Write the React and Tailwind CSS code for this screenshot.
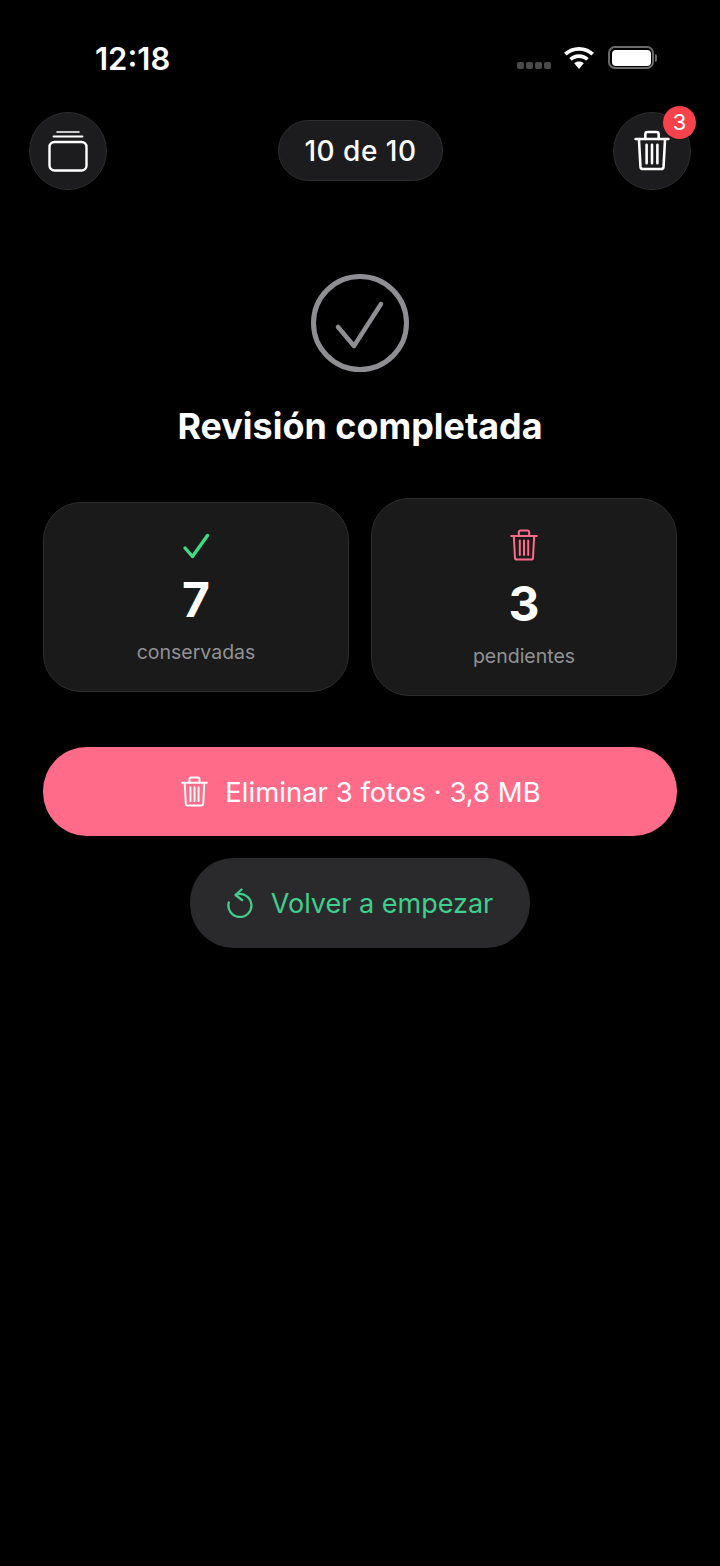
const font = { fontFamily: 'Inter, "Noto Sans", sans-serif' };

function TrashIcon({ className }) {
  return (
    <svg viewBox="0 0 28 32" fill="none" stroke="currentColor" strokeWidth="2" strokeLinecap="round" strokeLinejoin="round" className={className}>
      <path d="M1.200 7h25.600" />
      <path d="M8.800 7V3.200c0-1 .7-1.700 1.700-1.700h7c1 0 1.700.7 1.700 1.700V7" />
      <path d="M3.800 7l1.200 21.800c.1 1.100.8 1.700 1.900 1.700h14.200c1.100 0 1.800-.6 1.900-1.700L24.200 7" />
      <path d="M9.800 11.500v14.500M14 11.500v14.500M18.200 11.500v14.500" />
    </svg>
  );
}

function StackIcon() {
  return (
    <svg viewBox="0 0 40 42" fill="none" stroke="currentColor" strokeLinecap="round" className="w-[40px] h-[42px] text-white">
      <path d="M9 2h22" strokeWidth="1.600" />
      <path d="M5.500 6.500h29" strokeWidth="1.800" />
      <rect x="1.500" y="12" width="37" height="28.500" rx="5" strokeWidth="2.400" />
    </svg>
  );
}

function StatusBar() {
  return (
    <div className="h-[111px] pt-[41px] pl-[95px] pr-[63px] flex items-start justify-between">
      <span className="text-[31px] leading-[36px] font-semibold text-white">12:18</span>
      <div className="flex items-center pt-[5px]">
        <div className="flex gap-[2px] mr-[13px] mt-[16px]">
          <i className="w-[7px] h-[6.500px] rounded-[2px] bg-[#4a4a4a]" />
          <i className="w-[7px] h-[6.500px] rounded-[2px] bg-[#4a4a4a]" />
          <i className="w-[7px] h-[6.500px] rounded-[2px] bg-[#4a4a4a]" />
          <i className="w-[7px] h-[6.500px] rounded-[2px] bg-[#4a4a4a]" />
        </div>
        <svg viewBox="2.400 1 25.200 19.500" preserveAspectRatio="none" className="w-[30px] h-[22px] mr-[14px]" fill="white">
          <path d="M15 4.400c4 0 7.700 1.500 10.500 4.100l2.100-2.300C24.300 3 19.900 1 15 1S5.700 3 2.400 6.200l2.100 2.300C7.300 5.900 11 4.400 15 4.400z" />
          <path d="M15 10.800c2.300 0 4.400.9 6 2.300l2.200-2.300C21 8.700 18.100 7.500 15 7.500s-6 1.200-8.200 3.300L9 13.100c1.600-1.400 3.700-2.300 6-2.300z" />
          <path d="M15 13.800c-1.600 0-3 .6-4 1.500L15 20.500l4-5.200c-1-.9-2.400-1.500-4-1.500z" />
        </svg>
        <div className="flex items-center">
          <div className="w-[46px] h-[23px] rounded-[7px] border-2 border-[#6b6b6b] p-[1.500px]">
            <div className="w-full h-full rounded-[4px] bg-white" />
          </div>
          <div className="w-[2px] h-[8px] ml-[1px] rounded-r-[2px] bg-[#6b6b6b]" />
        </div>
      </div>
    </div>
  );
}

function Header() {
  return (
    <div className="h-[79px] px-[29px] flex items-center justify-between">
      <button className="w-[78px] h-[78px] rounded-full bg-[#1c1c1e] border border-[#2e2e30] flex items-center justify-center pt-[1px]">
        <StackIcon />
      </button>
      <div className="h-[61px] w-[165px] pl-[1px] rounded-full bg-[#1c1c1e] border border-[#2e2e30] flex items-center justify-center text-[28px] tracking-[0.5px] font-medium text-white">
        10 de 10
      </div>
      <button className="relative w-[78px] h-[78px] rounded-full bg-[#1c1c1e] border border-[#2e2e30] flex items-center justify-center text-white">
        <TrashIcon className="w-[36px] h-[41px]" />
        <span className="absolute -top-[7px] -right-[6px] w-[33px] h-[33px] rounded-full bg-[#f5424c] flex items-center justify-center text-[22px] font-normal text-white">3</span>
      </button>
    </div>
  );
}

function StatCard({ icon, value, label, className }) {
  return (
    <div className={`flex-1 flex flex-col items-center rounded-[38px] bg-[#1a1a1b] border border-[#2e2e30] pt-[30px] ${className}`}>
      {icon}
      <span className="mt-[11px] text-[48px] leading-[60px] font-bold text-white">{value}</span>
      <span className="mt-[10px] text-[19.500px] leading-[24px] text-[#929294]">{label}</span>
    </div>
  );
}

export default function App() {
  return (
    <div style={font} className="w-[720px] h-[1566px] bg-black overflow-hidden">
      <StatusBar />
      <Header />

      <div className="flex flex-col items-center pt-[84px]">
        <svg viewBox="0 0 98 98" fill="none" stroke="#8e8e93" strokeLinecap="round" strokeLinejoin="round" className="w-[98px] h-[98px]">
          <circle cx="49" cy="49" r="46.500" strokeWidth="5" />
          <path d="M27 53L43 72L70 30" strokeWidth="4.500" />
        </svg>
        <h1 className="mt-[31px] text-[35.900px] leading-[46px] font-bold text-white">Revisión completada</h1>
      </div>

      <div className="mt-[49px] px-[43px] flex items-center gap-[22px]">
        <StatCard
          className="h-[190px]"
          value="7"
          label="conservadas"
          icon={
            <svg viewBox="0 0 28 26" fill="none" stroke="#3ddc84" strokeWidth="3.400" strokeLinecap="round" strokeLinejoin="round" className="w-[28px] h-[26px]">
              <path d="M3 15L10.500 23.500L25.500 2.500" />
            </svg>
          }
        />
        <StatCard
          className="h-[198px]"
          value="3"
          label="pendientes"
          icon={<TrashIcon className="w-[28px] h-[32px] mb-[2px] text-[#ff6b88]" />}
        />
      </div>

      <div className="mt-[51px] px-[43px]">
        <button className="w-full h-[89px] pl-[2px] pt-[2px] rounded-[44px] bg-[#ff6b88] flex items-center justify-center gap-[17px] text-[27.500px] text-white">
          <TrashIcon className="w-[27px] h-[31px] -mt-[2px]" />
          Eliminar 3 fotos · 3,8 MB
        </button>
      </div>

      <div className="mt-[22px] flex justify-center">
        <button className="w-[340px] h-[90px] pt-[2px] rounded-[44px] bg-[#2a2a2c] flex items-center justify-center gap-[18px] text-[27px] text-[#3fcf8e]">
          <svg viewBox="0 0 26 30" fill="none" stroke="currentColor" strokeWidth="2.300" strokeLinecap="round" strokeLinejoin="round" className="w-[26px] h-[30px] -mt-[3px]">
            <path d="M9.500 6.500A11.500 11.500 0 1 1 1.800 14.500" />
            <path d="M14.500 1.500L8.500 7l6.500 5" />
          </svg>
          Volver a empezar
        </button>
      </div>
    </div>
  );
}
